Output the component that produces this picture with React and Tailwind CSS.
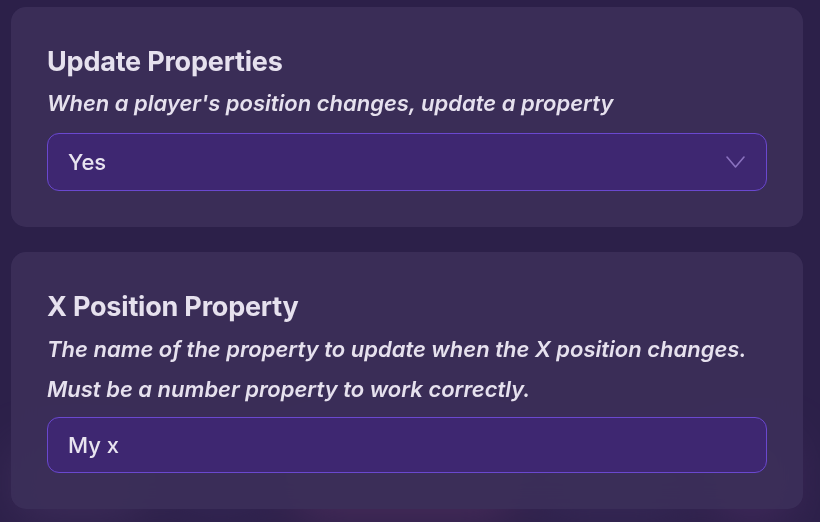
function Card({ title, children }) {
  return (
    <div className="rounded-[15px] bg-[#3b2e58]/95 backdrop-blur-md px-9 pt-[38px] pb-9">
      <h2 className="text-[27px] leading-[34px] font-bold text-[#e6e1ee] tracking-[-0.2px]">{title}</h2>
      {children}
    </div>
  );
}

function Chevron() {
  return (
    <svg width="19" height="12" viewBox="0 0 19 12" fill="none" className="text-[#8a72bf]">
      <path d="M1 1l8.5 10L18 1" stroke="currentColor" strokeWidth="1.6" strokeLinecap="round" strokeLinejoin="round" />
    </svg>
  );
}

export default function App() {
  return (
    <div
      className="relative w-[820px] h-[522px] overflow-hidden bg-[#2c2049]"
      style={{ fontFamily: "Inter, 'Noto Sans', sans-serif" }}
    >
      {/* blurred stuff behind the panel */}
      <div className="absolute inset-x-0 bottom-0 h-[90px] flex gap-6 px-4 blur-xl opacity-60">
        <div className="w-[130px] h-[70px] mt-4 rounded-xl bg-[#4a3566]" />
        <div className="w-[100px] h-[60px] mt-6 rounded-xl bg-[#3a2a5c]" />
        <div className="w-[220px] h-[80px] mt-2 rounded-xl bg-[#5a3366]" />
        <div className="w-[150px] h-[70px] mt-5 rounded-xl bg-[#3d2d5e]" />
        <div className="w-[80px] h-[80px] mt-2 rounded-xl bg-[#4f3068]" />
      </div>

      <div className="relative flex flex-col gap-[25px] pt-[7px] pl-[11px] w-[803px]">
        <Card title="Update Properties">
          <p className="mt-[5px] text-[22px] leading-[38px] italic font-semibold text-[#e6e1ee]">
            When a player's position changes, update a property
          </p>
          <div className="mt-[11px] h-[58px] flex items-center justify-between rounded-[12px] border border-[#6a48cf] bg-[#3e2771] pl-5 pr-[21px]">
            <span className="text-[22px] font-medium text-[#e8e4f0]">Yes</span>
            <Chevron />
          </div>
        </Card>

        <Card title="X Position Property">
          <p className="mt-[5px] text-[22px] leading-[40px] italic font-semibold text-[#e6e1ee]">
            The name of the property to update when the X position changes.
            <br />
            Must be a number property to work correctly.
          </p>
          <div className="mt-[8px] h-[56px] flex items-center rounded-[12px] border border-[#6a48cf] bg-[#3e2771] pl-5">
            <span className="text-[22px] font-medium text-[#e8e4f0]">My x</span>
          </div>
        </Card>
      </div>
    </div>
  );
}
